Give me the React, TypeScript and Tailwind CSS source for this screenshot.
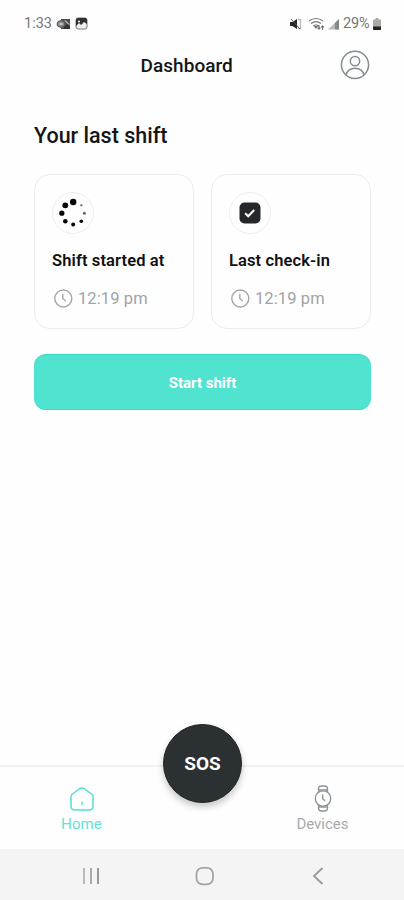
import type { ReactNode } from 'react';

function ClockIcon() {
  return (
    <svg className="h-5 w-5 shrink-0" viewBox="0 0 20 20" fill="none" stroke="#a3a7aa" strokeWidth="1.4" strokeLinecap="round">
      <circle cx="10.3" cy="9.5" r="8.5" />
      <path d="M9.8 5.2v4.3l2.6 2.2" />
    </svg>
  );
}

function SpinnerIcon() {
  return (
    <svg className="h-8 w-8" viewBox="0 0 32 32" fill="#050505">
      <circle cx="16.2" cy="5" r="3.2" />
      <circle cx="8.3" cy="8.3" r="2.9" />
      <circle cx="4.8" cy="16.2" r="2.6" />
      <circle cx="8.3" cy="24.3" r="2.3" />
      <circle cx="16.2" cy="27.4" r="2" />
      <circle cx="24.3" cy="24.3" r="1.8" />
      <circle cx="27.4" cy="16.2" r="1.5" fill="#666" />
      <circle cx="24.3" cy="8.3" r="1.2" fill="#888" />
    </svg>
  );
}

function CheckIcon() {
  return (
    <svg className="h-[22px] w-[22px]" viewBox="0 0 22 22" fill="none">
      <rect x="0.5" y="0.5" width="21" height="21" rx="5" fill="#24282a" />
      <path d="M6.2 11.2l3 3 6-6.2" stroke="#fff" strokeWidth="2" />
    </svg>
  );
}

function ShiftCard({ icon, title, time }: { icon: ReactNode; title: string; time: string }) {
  return (
    <div className="h-[155px] rounded-2xl border border-[#ececec] px-[17px] pt-[17px]">
      <div className="flex h-[42px] w-[42px] items-center justify-center rounded-full border border-[#eeeeee]">{icon}</div>
      <h3 className="mt-[15px] text-[16.5px] leading-6 font-semibold tracking-[0.12px] whitespace-nowrap text-[#111]">{title}</h3>
      <div className="mt-[14px] flex items-center gap-[5px] pl-px text-[#a0a3a6]">
        <ClockIcon />
        <span className="text-[16.5px] leading-6 tracking-[0.1px] whitespace-nowrap">{time}</span>
      </div>
    </div>
  );
}

function StatusBar() {
  return (
    <div className="flex h-[46px] items-center justify-between pt-px pr-[23px] pl-6 text-[#777]">
      <div className="flex items-center">
        <span className="w-[28px] text-[14.5px] leading-5 whitespace-nowrap">1:33</span>
        <svg className="ml-1 h-[14px] w-[15px]" viewBox="0 0 15 14">
          <path d="M5 2h9v10H5z" fill="#505050" />
          <ellipse cx="5" cy="7" rx="4" ry="3.3" fill="#888" stroke="#555" />
          <path d="M3.5 7h3M9 3.5l4 4" stroke="#fff" />
          <path d="M8 10l3-3 3 3v2H8z" fill="#333" />
        </svg>
        <svg className="ml-[4px] h-[13px] w-[13px]" viewBox="0 0 13 13">
          <rect x="1" y="1" width="11" height="11" rx="2" fill="#eee" stroke="#777" />
          <path d="M1 3q0-2 2-2h7q2 0 2 2v4L9 5 6 8 4 6 1 9z" fill="#303030" />
          <circle cx="4" cy="4.5" r="1" fill="#fff" />
        </svg>
      </div>
      <div className="flex items-center">
        <svg className="h-3 w-3" viewBox="0 0 12 12">
          <path d="M0 4h2.5L7 1v10L2.5 8H0z" fill="#252525" />
          <path d="M8 1.5h2.5v9H8" fill="none" stroke="#bbb" strokeWidth="1.3" />
          <path d="M1 1l9 10" stroke="#555" />
        </svg>
        <svg className="ml-[6px] h-[14px] w-[17px]" viewBox="0 0 17 14" fill="none" stroke="#777" strokeWidth="1.2">
          <path d="M1 4q7-5 14 0M3 6.5q5-3.6 10 0M5.3 9q2.7-2 5.4 0" />
          <path d="M7 9.5h2l-1 1.4zM11 8v4M9.7 10.7L11 12.2l1.3-1.5M14.5 13V9M13.2 10.3l1.3-1.5 1.3 1.5" fill="#555" />
        </svg>
        <svg className="ml-[2px] h-3 w-[13px]" viewBox="0 0 13 12">
          <path d="M1 11.5L12 1v10.5z" fill="#bbb" />
          <path d="M8 5l4-4v10.5H8z" fill="#888" />
        </svg>
        <span className="ml-[3px] w-[28px] text-[14.5px] leading-5 tracking-[-0.2px] whitespace-nowrap">29%</span>
        <svg className="ml-[2px] h-3 w-2" viewBox="0 0 8 12">
          <path d="M2.5 0h3v1.5H7q1 0 1 1V11q0 1-1 1H1q-1 0-1-1V2.5q0-1 1-1h1.5z" fill="#aaa" />
          <path d="M0 8.5h8V11q0 1-1 1H1q-1 0-1-1z" fill="#222" />
        </svg>
      </div>
    </div>
  );
}

function HomeIcon() {
  return (
    <svg className="h-6 w-6" viewBox="1 1 24 24" fill="none" stroke="#55dfcd" strokeWidth="1.5" strokeLinejoin="round">
      <path d="M2 10.7Q2 9 3.4 8l7.4-5.4q2.2-1.4 4.4 0L22.6 8Q24 9 24 10.7V20q0 4-4 4H6q-4 0-4-4z" />
      <path d="M13 16.4v2" strokeLinecap="round" />
    </svg>
  );
}

function WatchIcon() {
  return (
    <svg className="h-[27px] w-[18px]" viewBox="0 0 18 27" fill="none" stroke="#8f9497" strokeWidth="1.35" strokeLinejoin="round">
      <circle cx="9" cy="13.5" r="7.7" />
      <path d="M4.5 7.3V4q0-3 3-3h3q3 0 3 3v3.3M4.5 5h9M4.5 19.7V23q0 3 3 3h3q3 0 3-3v-3.3M4.5 22h9" />
      <path d="M8.7 10v3.8l2 1.8" strokeLinecap="round" />
    </svg>
  );
}

export default function App() {
  return (
    <div className="flex h-[900px] w-[404px] flex-col overflow-hidden bg-[#fefefe] font-['Roboto','Liberation_Sans',sans-serif]">
      <StatusBar />
      <header className="flex h-[38px] items-center justify-between pr-[34px] pl-[140.5px]">
        <h1 className="pt-px text-[19px] leading-6 font-medium tracking-[0.05px] text-[#151515]">Dashboard</h1>
        <svg className="h-[30px] w-[30px]" viewBox="0 0 30 30" fill="none" stroke="#858c8f" strokeWidth="1.5">
          <circle cx="15" cy="14.8" r="13.6" />
          <circle cx="15" cy="11.1" r="4.7" />
          <path d="M6.2 25c1-9 16.6-9 17.6 0" />
        </svg>
      </header>
      <main className="flex-1 pt-[38px] pr-[33px] pl-[34px]">
        <h2 className="text-[21.5px] leading-7 font-medium text-[#151515]">Your last shift</h2>
        <div className="mt-[24px] grid grid-cols-2 gap-[17px]">
          <ShiftCard icon={<SpinnerIcon />} title="Shift started at" time="12:19 pm" />
          <ShiftCard icon={<CheckIcon />} title="Last check-in" time="12:19 pm" />
        </div>
        <button className="mt-[25px] h-[56px] w-full rounded-xl border-y border-[#36dac3] bg-[#50e3d0] pt-[2px] text-[15px] font-bold text-white">
          Start shift
        </button>
      </main>
      <nav className="relative grid h-[84px] grid-cols-[163px_1fr_163px] border-t-2 border-[#f3f3f3] text-[15px] leading-5">
        <div className="flex flex-col items-center pt-[20px] text-[#65e2d2]">
          <HomeIcon />
          <span className="mt-[3px] tracking-[0.1px]">Home</span>
        </div>
        <button className="absolute -top-[43px] left-[163px] h-[79px] w-[79px] rounded-full border border-[#1d2224] bg-[#2b3033] text-[19px] font-bold text-white shadow-[0_4px_7px_rgba(0,0,0,0.22)]">
          SOS
        </button>
        <div className="col-start-3 flex flex-col items-center pt-[18px] text-[#a7abad]">
          <WatchIcon />
          <span className="mt-[2px]">Devices</span>
        </div>
      </nav>
      <footer className="grid h-[51px] grid-cols-[136px_136px_1fr] items-center bg-[#f4f4f4] pt-[3px]">
        <svg className="ml-[82px] h-[18px] w-[18px]" viewBox="0 0 18 18" fill="none" strokeWidth="2">
          <path d="M2 1v16" stroke="#bbb" />
          <path d="M9 1v16" stroke="#aaa" />
          <path d="M16 1v16" stroke="#999" />
        </svg>
        <svg className="ml-[59px] h-5 w-5" viewBox="0 0 20 20" fill="none" stroke="#a3a3a3" strokeWidth="1.8">
          <rect x="1.5" y="1.8" width="16.5" height="16.5" rx="6" />
        </svg>
        <svg className="ml-[40px] h-5 w-3" viewBox="0 0 12 20" fill="none" stroke="#999" strokeWidth="1.8">
          <path d="M10.5 2L2 10l8.5 8" />
        </svg>
      </footer>
    </div>
  );
}
